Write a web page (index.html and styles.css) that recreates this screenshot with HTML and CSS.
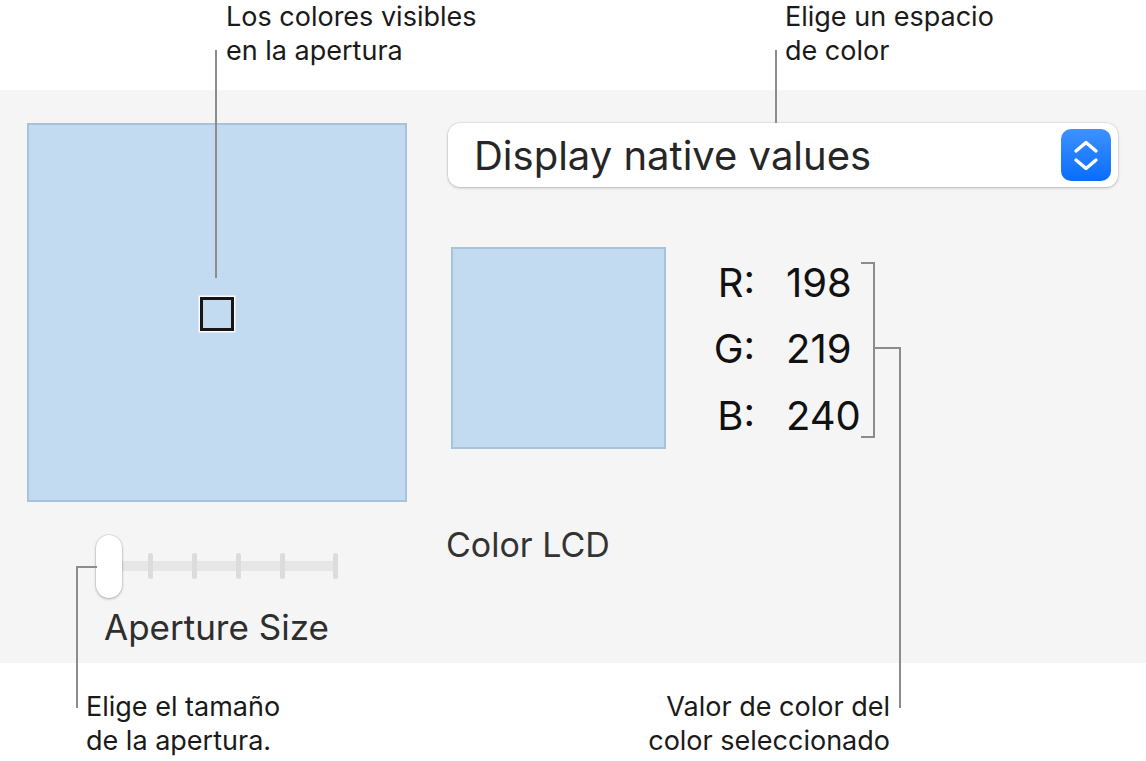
FILE: index.html
```html
<!DOCTYPE html>
<html lang="es">
  <head>
    <meta charset="UTF-8" />
    <meta name="viewport" content="width=device-width, initial-scale=1.0" />
    <title>Colorímetro digital</title>
    <link rel="stylesheet" href="styles.css">
  </head>
  <body>
    <div class="figure">
      <div class="top-band">
        <p class="note note-aperture">Los colores visibles<br>en la apertura</p>
        <p class="note">Elige un espacio<br>de color</p>
      </div>

      <div class="panel">
        <div class="left-col">
          <div class="aperture">
            <span class="aperture-target"></span>
          </div>
          <div class="slider">
            <div class="track">
              <span class="tick"></span>
              <span class="tick"></span>
              <span class="tick"></span>
              <span class="tick"></span>
              <span class="tick"></span>
              <span class="tick tick-last"></span>
            </div>
            <span class="knob"></span>
          </div>
          <div class="slider-label">Aperture Size</div>
        </div>

        <div class="right-col">
          <div class="popup">
            <span class="popup-text">Display native values</span>
            <span class="stepper">
              <svg width="50" height="52" viewBox="0 0 50 52">
                <path d="M15 22 L25 13.5 L35 22 M15 31 L25 39.5 L35 31" fill="none" stroke="#fff" stroke-width="3.4" stroke-linecap="round" stroke-linejoin="round" />
              </svg>
            </span>
          </div>

          <div class="readout">
            <div class="sample"></div>
            <div class="values">
              <span class="channel">R:</span><span class="amount">198</span>
              <span class="channel">G:</span><span class="amount">219</span>
              <span class="channel">B:</span><span class="amount">240</span>
            </div>
          </div>

          <div class="profile">Color LCD</div>
        </div>
      </div>

      <div class="bottom-band">
        <p class="note note-size">Elige el tamaño<br>de la apertura.</p>
        <p class="note note-value">Valor de color del<br>color seleccionado</p>
      </div>

      <!-- leader lines for the callouts -->
      <span class="leader" style="left: 215px; top: 50px; width: 2px; height: 228px;"></span>
      <span class="leader" style="left: 775px; top: 50px; width: 2px; height: 73px;"></span>
      <span class="leader" style="left: 76px; top: 566px; width: 2px; height: 142px;"></span>
      <span class="leader" style="left: 76px; top: 566px; width: 21px; height: 2px;"></span>
      <span class="leader" style="left: 873px; top: 262px; width: 2px; height: 176px;"></span>
      <span class="leader" style="left: 861px; top: 262px; width: 14px; height: 2px;"></span>
      <span class="leader" style="left: 861px; top: 436px; width: 14px; height: 2px;"></span>
      <span class="leader" style="left: 875px; top: 347px; width: 26px; height: 2px;"></span>
      <span class="leader" style="left: 899px; top: 347px; width: 2px; height: 361px;"></span>
    </div>
  </body>
</html>
```

FILE: styles.css
```css
body {
  margin: 0;
  padding: 0;
  background-color: #fff;
  font-family: "Inter", "Liberation Sans", sans-serif;
}

.figure {
  position: relative;
  width: 1146px;
  height: 761px;
  overflow: hidden;
}

.note {
  margin: 0;
  font-size: 27px;
  line-height: 34px;
  color: #1a1a1a;
}

.top-band {
  display: flex;
  height: 90px;
  padding-left: 226px;
  box-sizing: border-box;
}

.note-aperture {
  width: 559px;
}

.panel {
  display: flex;
  gap: 41px;
  height: 573px;
  padding-left: 27px;
  box-sizing: border-box;
  background-color: #f5f5f5;
}

.left-col {
  width: 380px;
  padding-top: 33px;
}

.aperture {
  display: flex;
  justify-content: center;
  align-items: center;
  width: 380px;
  height: 379px;
  box-sizing: border-box;
  border: 2px solid #a8c2da;
  background-color: #c3dbf1;
}

.aperture-target {
  width: 34px;
  height: 34px;
  margin-top: 3px;
  box-sizing: border-box;
  border: 3px solid #161616;
  box-shadow: 0 0 0 1.5px rgba(255, 255, 255, 0.9);
}

.slider {
  position: relative;
  height: 63px;
  margin-top: 33px;
  margin-left: 69px;
  width: 242px;
}

.track {
  position: absolute;
  left: 1px;
  right: 0;
  top: 26px;
  height: 10px;
  border-radius: 5px;
  background-color: #e6e6e6;
  display: flex;
  gap: 39px;
  align-items: center;
  padding-left: 7px;
}

.tick {
  flex: none;
  width: 5px;
  height: 26px;
  border-radius: 2px;
  background-color: #dcdcdc;
}

.tick-last {
  margin-left: auto;
}

.knob {
  position: absolute;
  left: 0;
  top: 0;
  width: 26px;
  height: 63px;
  border-radius: 13px;
  background-color: #fff;
  box-shadow: 0 1px 3px rgba(0, 0, 0, 0.28), 0 0 0 0.5px rgba(0, 0, 0, 0.12);
}

.slider-label {
  margin-top: 8px;
  margin-left: 77px;
  font-size: 35px;
  line-height: 42px;
  color: #2e2e2e;
}

.right-col {
  width: 670px;
  padding-top: 33px;
}

.popup {
  display: flex;
  align-items: center;
  height: 64px;
  padding-left: 26px;
  padding-right: 7px;
  box-sizing: border-box;
  border-radius: 12px;
  background-color: #fff;
  box-shadow: 0 1px 3px rgba(0, 0, 0, 0.22), 0 0 0 0.5px rgba(0, 0, 0, 0.1);
}

.popup-text {
  font-size: 40px;
  color: #262626;
}

.stepper {
  display: flex;
  margin-left: auto;
  width: 50px;
  height: 52px;
  border-radius: 10px;
  background: linear-gradient(#3f91ff, #086dfc);
}

.readout {
  display: flex;
  margin-top: 60px;
  margin-left: 3px;
}

.sample {
  width: 215px;
  height: 202px;
  box-sizing: border-box;
  border: 2px solid #a8c2da;
  background-color: #c3dbf1;
}

.values {
  display: grid;
  grid-template-columns: 82px auto;
  column-gap: 31px;
  margin-top: 3px;
  margin-left: 7px;
  font-size: 40px;
  line-height: 66px;
  color: #111;
}

.channel {
  text-align: right;
}

.profile {
  margin-top: 76px;
  margin-left: -2px;
  font-size: 34px;
  line-height: 40px;
  color: #333;
}

.bottom-band {
  display: flex;
  padding-top: 27px;
  padding-left: 86px;
}

.note-size {
  width: 300px;
}

.note-value {
  width: 504px;
  text-align: right;
}

.leader {
  position: absolute;
  background-color: #8c8c8c;
}
```
